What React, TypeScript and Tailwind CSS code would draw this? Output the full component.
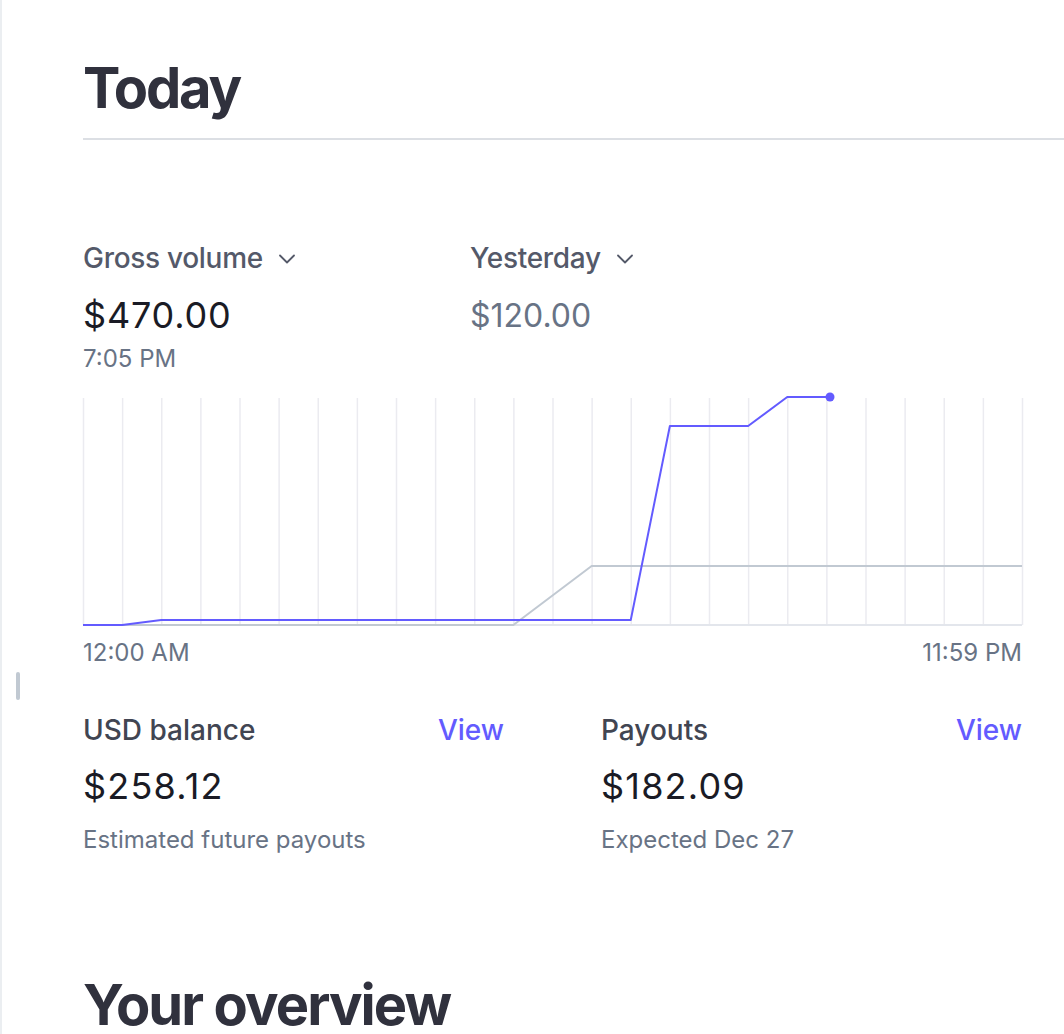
import React from "react";

const GRID_STEP = 39.125;
const CHART_W = 939;
const CHART_H = 227;

const gridLines = Array.from({ length: 25 }, (_, i) => i * GRID_STEP);

const todayPath = [
  [0, 227],
  [1 * GRID_STEP, 227],
  [2 * GRID_STEP, 222],
  [14 * GRID_STEP, 222],
  [15 * GRID_STEP, 28],
  [17 * GRID_STEP, 28],
  [18 * GRID_STEP, -1],
  [747, -1],
];

const yesterdayPath = [
  [0, 227],
  [11 * GRID_STEP, 227],
  [13 * GRID_STEP, 168],
  [CHART_W, 168],
];

const toPoints = (pts: number[][]) => pts.map(([x, y]) => `${x},${y}`).join(" ");

const Chevron = () => (
  <svg width="16" height="10" viewBox="0 0 16 10" className="ml-[16px] mt-[2px]">
    <polyline points="1,1.5 8,8.5 15,1.5" fill="none" stroke="#545969" strokeWidth="1.8" strokeLinecap="round" strokeLinejoin="round" />
  </svg>
);

const MetricSelect = ({ label }: { label: string }) => (
  <div className="flex items-center h-[36px]">
    <span className="text-[28px] leading-[36px] font-medium text-[#545969] tracking-[-0.3px]">{label}</span>
    <Chevron />
  </div>
);

const Chart = () => (
  <svg width={CHART_W} height={CHART_H + 1} viewBox={`0 0 ${CHART_W} ${CHART_H + 1}`} className="block overflow-visible">
    {gridLines.map((x, i) => (
      <line key={i} x1={x + 0.5} x2={x + 0.5} y1={0} y2={CHART_H} stroke="#ebebf0" strokeWidth="1.5" />
    ))}
    <line x1={0} x2={CHART_W} y1={CHART_H} y2={CHART_H} stroke="#e3e6ec" strokeWidth="2" />
    <polyline points={toPoints(yesterdayPath)} fill="none" stroke="#c1c9d2" strokeWidth="2" strokeLinejoin="round" />
    <polyline points={toPoints(todayPath)} fill="none" stroke="#635bff" strokeWidth="2" strokeLinejoin="round" />
    <circle cx={747} cy={-1} r={4.5} fill="#635bff" />
  </svg>
);

const BalanceCard = ({ title, amount, note }: { title: string; amount: string; note: string }) => (
  <div className="flex flex-col">
    <div className="flex items-center justify-between h-[36px]">
      <span className="text-[28px] leading-[36px] font-medium text-[#414552]">{title}</span>
      <a className="text-[28px] leading-[36px] font-medium text-[#635bff] cursor-pointer">View</a>
    </div>
    <div className="mt-[16px] text-[36px] leading-[44px] text-[#1a1b25] tracking-[1.2px]">{amount}</div>
    <div className="mt-[16px] text-[24px] leading-[32px] text-[#687385]">{note}</div>
  </div>
);

export default function App() {
  return (
    <div
      className="relative min-h-screen bg-white border-l-2 border-[#ebeef1] overflow-hidden"
      style={{ fontFamily: "Inter, 'Noto Sans', 'Liberation Sans', sans-serif" }}
    >
      {/* sidebar resize handle */}
      <div className="absolute left-[14px] top-[672px] w-[4px] h-[28px] rounded-full bg-[#c1c9d2]" />

      <div className="pl-[81px] pt-[56px]">
        <h1 className="text-[56px] leading-[64px] font-bold text-[#30313d] tracking-[-2.2px]">Today</h1>
        <div className="mt-[18px] h-[2px] bg-[#dcdfe4]" />

        <div className="w-[939px]">
          <div className="mt-[100px] flex">
            <div className="w-[387px] flex flex-col">
              <MetricSelect label="Gross volume" />
              <div className="mt-[17px] text-[36px] leading-[44px] text-[#1a1b25] tracking-[0.8px]">$470.00</div>
              <div className="mt-[6px] text-[24px] leading-[32px] text-[#687385]">7:05 PM</div>
            </div>
            <div className="flex flex-col">
              <MetricSelect label="Yesterday" />
              <div className="mt-[20px] text-[32px] leading-[40px] text-[#687385]">$120.00</div>
            </div>
          </div>

          <div className="mt-[23px]">
            <Chart />
          </div>

          <div className="mt-[11px] flex justify-between text-[24px] leading-[32px] text-[#687385]">
            <span>12:00 AM</span>
            <span>11:59 PM</span>
          </div>

          <div className="mt-[43px] grid grid-cols-2 gap-x-[97px]">
            <BalanceCard title="USD balance" amount="$258.12" note="Estimated future payouts" />
            <BalanceCard title="Payouts" amount="$182.09" note="Expected Dec 27" />
          </div>

          <h2 className="mt-[117px] text-[56px] leading-[64px] font-bold text-[#30313d] tracking-[-1.9px]">Your overview</h2>
        </div>
      </div>
    </div>
  );
}
